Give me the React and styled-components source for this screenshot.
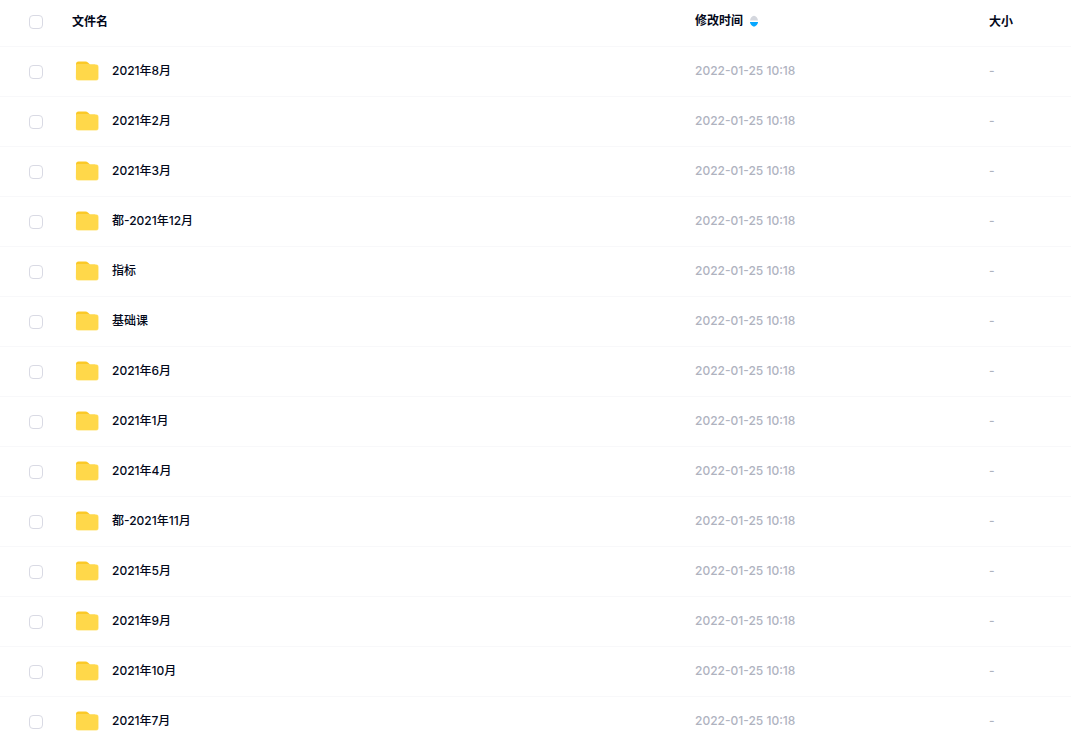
import React from "react";
import styled, { createGlobalStyle } from "styled-components";

const GlobalStyle = createGlobalStyle`
  * { box-sizing: border-box; }
  body {
    margin: 0;
    background: #fff;
    color: #03081a;
    font-family: Inter, "Noto Sans CJK SC", sans-serif;
    font-size: 12px;
    line-height: 18px;
  }
`;

const FileTable = styled.table`
  width: 100%;
  padding-right: 3px;
  border-collapse: separate;
  border-spacing: 0;
  table-layout: fixed;
`;

const CheckCol = styled.col`
  width: 72px;
`;

const TimeCol = styled.col`
  width: 294px;
`;

const SizeCol = styled.col`
  width: 82px;
`;

const HeadCell = styled.th`
  height: 47px;
  padding: 0 0 ${(p) => (p.$control ? 4 : 3)}px;
  border-bottom: 1px solid #f8f8fa;
  text-align: left;
  font-weight: 700;
  color: #03081a;
  white-space: nowrap;
`;

const Cell = styled.td`
  height: 50px;
  padding: 0 0 1px;
  border-bottom: 1px solid #f8f8fa;
  color: ${(p) => (p.$muted ? "#afb3bf" : "#03081a")};
  font-weight: 500;
  white-space: nowrap;
`;

const Check = styled.input`
  appearance: none;
  display: block;
  width: 14px;
  height: 14px;
  margin: 2px 0 0 29px;
  border: 1px solid #d9dae4;
  border-radius: 4px;
  background: #fff;
  &:checked { background: #06a7ff; border-color: #06a7ff; }
`;

const FileName = styled.label`
  display: flex;
  align-items: center;
  gap: 13px;
  padding-left: 3px;
`;

const SortButton = styled.button`
  display: flex;
  align-items: center;
  gap: 7px;
  padding: 0;
  border: 0;
  background: none;
  font: inherit;
  color: inherit;
`;

const FolderIcon = () => (
  <svg width="24" height="20" viewBox="0 0 24 20" aria-hidden="true">
    <path d="M1 3a2.500 2.500 0 0 1 2.500-2.500h7c1 0 1.700.3 2.400.9l2.200 2.200H20V10H1z" fill="#fbc926" />
    <path d="M1 4.400c0-.6.700-1 1.600-1H21.300A2.300 2.300 0 0 1 23.600 5.700V17.300a2.300 2.300 0 0 1-2.300 2.300H3.100A2.300 2.300 0 0 1 .8 17.300z" fill="#ffe57e" />
    <path d="M1 4.800c0-.6.700-1 1.600-1H21a2 2 0 0 1 2 2V17a2 2 0 0 1-2 2H3a2 2 0 0 1-2-2z" fill="#ffd84a" />
  </svg>
);

const SortIcon = () => (
  <svg width="8" height="12" viewBox="0 0 8 12" aria-hidden="true">
    <path d="M0 5.500C.2 3 2 .8 4 .8S7.800 3 8 5.500z" fill="#d4d7de" />
    <path d="M0 7h8c0 2-2 4.500-4 4.500S0 9 0 7z" fill="#06a7ff" />
  </svg>
);

const names = [
  "2021年8月", "2021年2月", "2021年3月", "都-2021年12月", "指标", "基础课", "2021年6月",
  "2021年1月", "2021年4月", "都-2021年11月", "2021年5月", "2021年9月", "2021年10月", "2021年7月",
];

export default function App() {
  return (
    <>
      <GlobalStyle />
      <FileTable>
        <colgroup>
          <CheckCol />
          <col />
          <TimeCol />
          <SizeCol />
        </colgroup>
        <thead>
          <tr>
            <HeadCell $control><Check type="checkbox" aria-label="全选" /></HeadCell>
            <HeadCell>文件名</HeadCell>
            <HeadCell $control><SortButton type="button">修改时间<SortIcon /></SortButton></HeadCell>
            <HeadCell>大小</HeadCell>
          </tr>
        </thead>
        <tbody>
          {names.map((name, i) => (
            <tr key={name}>
              <Cell><Check type="checkbox" id={`file-${i}`} /></Cell>
              <Cell><FileName htmlFor={`file-${i}`}><FolderIcon />{name}</FileName></Cell>
              <Cell $muted>2022-01-25 10:18</Cell>
              <Cell $muted>-</Cell>
            </tr>
          ))}
        </tbody>
      </FileTable>
    </>
  );
}
